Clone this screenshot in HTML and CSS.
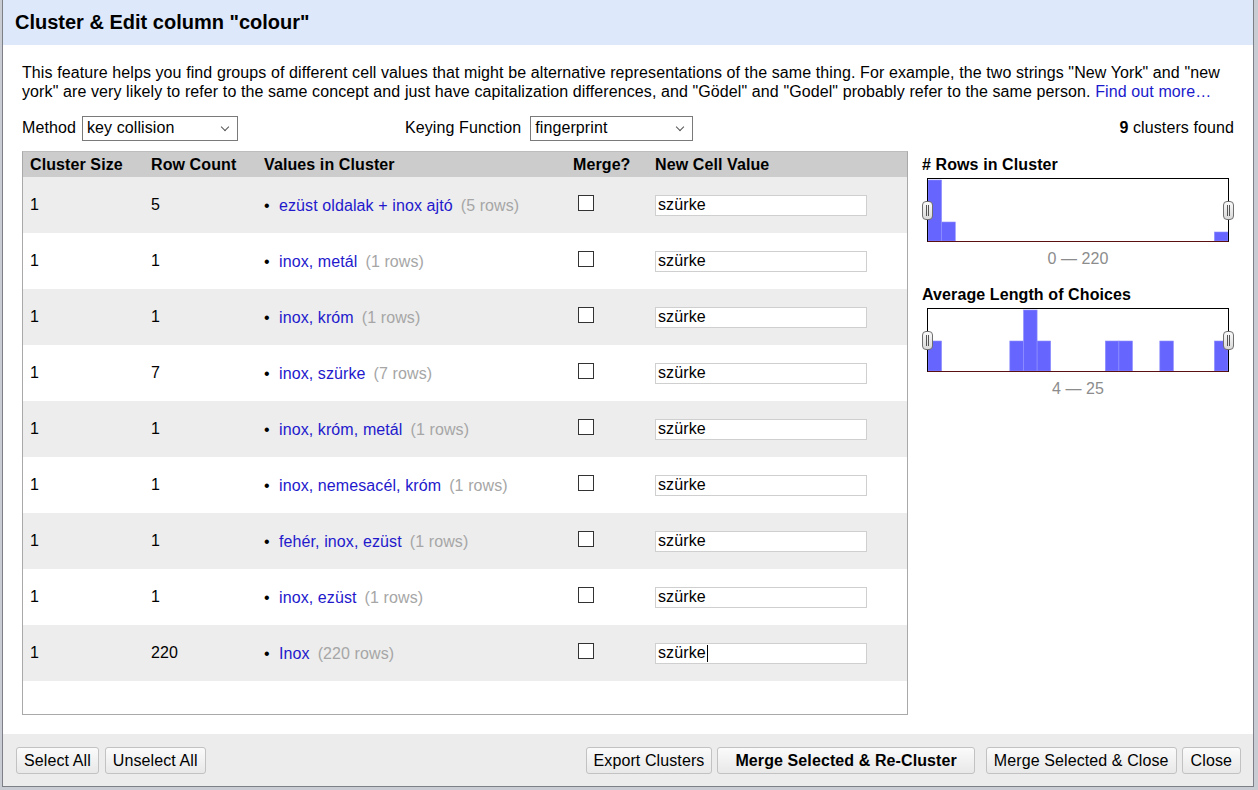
FILE: index.html
```html
<!DOCTYPE html>
<html>
<head>
<meta charset="utf-8">
<link rel="stylesheet" href="styles.css">
</head>
<body>
<div class="dialog">
  <div class="dlg-header">Cluster &amp; Edit column "colour"</div>
  <div class="dlg-body">
    <p class="desc">This feature helps you find groups of different cell values that might be alternative representations of the same thing. For example, the two strings "New York" and "new york" are very likely to refer to the same concept and just have capitalization differences, and "Gödel" and "Godel" probably refer to the same person. <a href="#" class="link">Find out more…</a></p>
    <div class="controls">
      <label class="ctl ctl-method">Method <span class="select sel-method">key collision</span></label>
      <label class="ctl ctl-key">Keying Function <span class="select sel-key">fingerprint</span></label>
      <div class="found"><b>9</b> clusters found</div>
    </div>
    <div class="main">
      <div class="table-box">
        <table class="clusters">
          <colgroup>
            <col class="c1"><col class="c2"><col class="c3"><col class="c4"><col class="c5">
          </colgroup>
          <thead>
            <tr><th>Cluster Size</th><th>Row Count</th><th>Values in Cluster</th><th>Merge?</th><th>New Cell Value</th></tr>
          </thead>
          <tbody>
            <tr class="odd"><td>1</td><td>5</td><td><span class="bullet">•</span><a class="val">ezüst oldalak + inox ajtó</a><span class="rows">(5 rows)</span></td><td><span class="cb"></span></td><td><input class="nv" value="szürke"></td></tr>
            <tr><td>1</td><td>1</td><td><span class="bullet">•</span><a class="val">inox, metál</a><span class="rows">(1 rows)</span></td><td><span class="cb"></span></td><td><input class="nv" value="szürke"></td></tr>
            <tr class="odd"><td>1</td><td>1</td><td><span class="bullet">•</span><a class="val">inox, króm</a><span class="rows">(1 rows)</span></td><td><span class="cb"></span></td><td><input class="nv" value="szürke"></td></tr>
            <tr><td>1</td><td>7</td><td><span class="bullet">•</span><a class="val">inox, szürke</a><span class="rows">(7 rows)</span></td><td><span class="cb"></span></td><td><input class="nv" value="szürke"></td></tr>
            <tr class="odd"><td>1</td><td>1</td><td><span class="bullet">•</span><a class="val">inox, króm, metál</a><span class="rows">(1 rows)</span></td><td><span class="cb"></span></td><td><input class="nv" value="szürke"></td></tr>
            <tr><td>1</td><td>1</td><td><span class="bullet">•</span><a class="val">inox, nemesacél, króm</a><span class="rows">(1 rows)</span></td><td><span class="cb"></span></td><td><input class="nv" value="szürke"></td></tr>
            <tr class="odd"><td>1</td><td>1</td><td><span class="bullet">•</span><a class="val">fehér, inox, ezüst</a><span class="rows">(1 rows)</span></td><td><span class="cb"></span></td><td><input class="nv" value="szürke"></td></tr>
            <tr><td>1</td><td>1</td><td><span class="bullet">•</span><a class="val">inox, ezüst</a><span class="rows">(1 rows)</span></td><td><span class="cb"></span></td><td><input class="nv" value="szürke"></td></tr>
            <tr class="odd"><td>1</td><td>220</td><td><span class="bullet">•</span><a class="val">Inox</a><span class="rows">(220 rows)</span></td><td><span class="cb"></span></td><td><span class="nv nv-focus">szürke<span class="caret"></span></span></td></tr>
          </tbody>
        </table>
      </div>
      <div class="facets">
        <div class="facet">
          <div class="facet-title"># Rows in Cluster</div>
          <div class="chart">
            <svg width="300" height="62" viewBox="0 0 300 62">
              <rect x="0" y="1" width="13.6" height="61" class="bar"/>
              <rect x="13.6" y="43" width="13.7" height="19" class="bar"/>
              <rect x="286.4" y="53" width="13.6" height="9" class="bar"/>
            </svg>
            <span class="handle h-left"></span>
            <span class="handle h-right"></span>
          </div>
          <div class="range">0 — 220</div>
        </div>
        <div class="facet">
          <div class="facet-title">Average Length of Choices</div>
          <div class="chart">
            <svg width="300" height="62" viewBox="0 0 300 62">
              <rect x="0" y="32" width="13.6" height="30" class="bar"/>
              <rect x="81.8" y="32" width="13.6" height="30" class="bar"/>
              <rect x="95.5" y="1" width="13.6" height="61" class="bar"/>
              <rect x="109.1" y="32" width="13.6" height="30" class="bar"/>
              <rect x="177.3" y="32" width="13.6" height="30" class="bar"/>
              <rect x="190.9" y="32" width="13.6" height="30" class="bar"/>
              <rect x="231.8" y="32" width="13.6" height="30" class="bar"/>
              <rect x="286.4" y="32" width="13.6" height="30" class="bar"/>
            </svg>
            <span class="handle h-left"></span>
            <span class="handle h-right"></span>
          </div>
          <div class="range">4 — 25</div>
        </div>
      </div>
    </div>
  </div>
  <div class="dlg-footer">
    <div class="left-btns">
      <button class="btn">Select All</button>
      <button class="btn">Unselect All</button>
    </div>
    <div class="right-btns">
      <button class="btn">Export Clusters</button>
      <button class="btn btn-bold">Merge Selected &amp; Re-Cluster</button>
      <button class="btn">Merge Selected &amp; Close</button>
      <button class="btn btn-close">Close</button>
    </div>
  </div>
</div>
</body>
</html>
```

FILE: styles.css
```css
html, body {
  margin: 0;
  padding: 0;
}
body {
  width: 1258px;
  height: 790px;
  overflow: hidden;
  background: #c9ccd2;
  font-family: "Liberation Sans", Arial, sans-serif;
  font-size: 16px;
  letter-spacing: 0.1px;
  color: #000;
}
.dialog {
  margin-left: 2px;
  width: 1250px;
  height: 786px;
  background: #fff;
  border: 1px solid #7d8086;
  border-top: none;
  display: flex;
  flex-direction: column;
}
.dlg-header {
  height: 45px;
  background: #dde9fa;
  box-sizing: border-box;
  padding: 0 0 0 12px;
  display: flex;
  align-items: center;
  font-weight: bold;
  font-size: 20px;
  letter-spacing: 0;
}
.dlg-body {
  flex: 1;
  padding: 18px 19px 19px 19px;
  display: flex;
  flex-direction: column;
}
.desc {
  margin: 0;
  line-height: 19px;
}
.link {
  color: #1a1acc;
  text-decoration: none;
}
.controls {
  display: flex;
  align-items: center;
  height: 26px;
  margin-top: 14px;
  margin-bottom: 10px;
}
.ctl {
  display: flex;
  align-items: center;
  gap: 6px;
}
.ctl-key {
  margin-left: 167px;
  gap: 9px;
}
.select {
  box-sizing: border-box;
  height: 25px;
  border: 1px solid #7a7a7a;
  background: #fff;
  display: flex;
  align-items: center;
  padding: 0 0 0 4px;
  position: relative;
}
.select::after {
  content: "";
  position: absolute;
  right: 9px;
  top: 7px;
  width: 5px;
  height: 5px;
  border-right: 1px solid #555;
  border-bottom: 1px solid #555;
  transform: rotate(45deg);
}
.sel-method { width: 156px; }
.sel-key { width: 163px; }
.found {
  margin-left: auto;
}
.main {
  flex: 1;
  display: flex;
  gap: 14px;
}
.table-box {
  width: 884px;
  border: 1px solid #a9a9a9;
  border-top-color: #bdbdbd;
  background: #fff;
}
.clusters {
  border-collapse: collapse;
  table-layout: fixed;
  width: 884px;
}
.c1 { width: 121px; }
.c2 { width: 113px; }
.c3 { width: 309px; }
.c4 { width: 82px; }
.c5 { width: 259px; }
.clusters th {
  background: #cccccc;
  height: 25px;
  text-align: left;
  font-weight: bold;
  padding: 0 0 0 7px;
}
.clusters td {
  height: 56px;
  padding: 0 0 0 7px;
  white-space: nowrap;
}
.clusters td > * {
  position: relative;
  top: 1px;
}
.clusters tr.odd td {
  background: #ededed;
}
.bullet {
  display: inline-block;
  width: 15px;
  font-size: 16px;
}
.val {
  color: #2319cc;
}
.rows {
  color: #a6a6a6;
  margin-left: 8px;
}
.clusters td > .cb {
  display: inline-block;
  box-sizing: border-box;
  width: 16px;
  height: 16px;
  border: 1px solid #333;
  background: #fff;
  margin-left: 5px;
  vertical-align: middle;
  top: -3px;
}
.nv {
  box-sizing: border-box;
  width: 212px;
  height: 21px;
  border: 1px solid #cfcfcf;
  padding: 0 2px;
  font-family: "Liberation Sans", Arial, sans-serif;
  font-size: 16px;
  letter-spacing: 0.1px;
  color: #000;
  background: #fff;
  outline: none;
  display: inline-flex;
  align-items: center;
  vertical-align: middle;
}
.clusters td > .nv {
  top: 0;
}
.caret {
  display: inline-block;
  width: 1px;
  height: 17px;
  background: #000;
  margin-left: 1px;
}
.facets {
  width: 311px;
  display: flex;
  flex-direction: column;
}
.facet-title {
  font-weight: bold;
  line-height: 24px;
  margin-top: 2px;
}
.chart {
  position: relative;
  margin-left: 5px;
  width: 300px;
  height: 62px;
  border: 1px solid #000;
  border-bottom-color: #5a1010;
  margin-top: 1px;
}
.chart svg {
  display: block;
}
.bar {
  fill: #6666ff;
  stroke: #8f8fff;
  stroke-width: 0.6;
}
.handle {
  position: absolute;
  top: 22px;
  width: 11px;
  height: 19px;
  box-sizing: border-box;
  border: 1px solid #6f6f6f;
  border-radius: 4px;
  background: linear-gradient(#fafafa, #d9d9d9);
}
.handle::before,
.handle::after {
  content: "";
  position: absolute;
  top: 3px;
  width: 1px;
  height: 11px;
  background: #555;
}
.handle::before { left: 3px; }
.handle::after { left: 5px; }
.h-left { left: -6px; }
.h-right { right: -6px; }
.range {
  text-align: center;
  color: #8c8c8c;
  margin-left: 5px;
  width: 302px;
  line-height: 20px;
  margin-top: 7px;
  margin-bottom: 12px;
}
.dlg-footer {
  height: 52px;
  background: #ececec;
  box-sizing: border-box;
  padding: 13px 12px 0 13px;
  display: flex;
  justify-content: space-between;
  align-items: flex-start;
}
.left-btns, .right-btns {
  display: flex;
  gap: 6px;
}
.right-btns {
  gap: 5px;
}
.btn {
  height: 27px;
  padding: 0 7px;
  font-family: "Liberation Sans", Arial, sans-serif;
  font-size: 16px;
  letter-spacing: 0.1px;
  color: #000;
  border: 1px solid #c2c2c2;
  border-radius: 3px;
  background: linear-gradient(#fbfbfb, #e8e8e8);
}
.btn-bold {
  font-weight: bold;
  padding: 0 17px;
  margin-right: 6px;
}
.btn-close {
  padding: 0 8px;
}
```
